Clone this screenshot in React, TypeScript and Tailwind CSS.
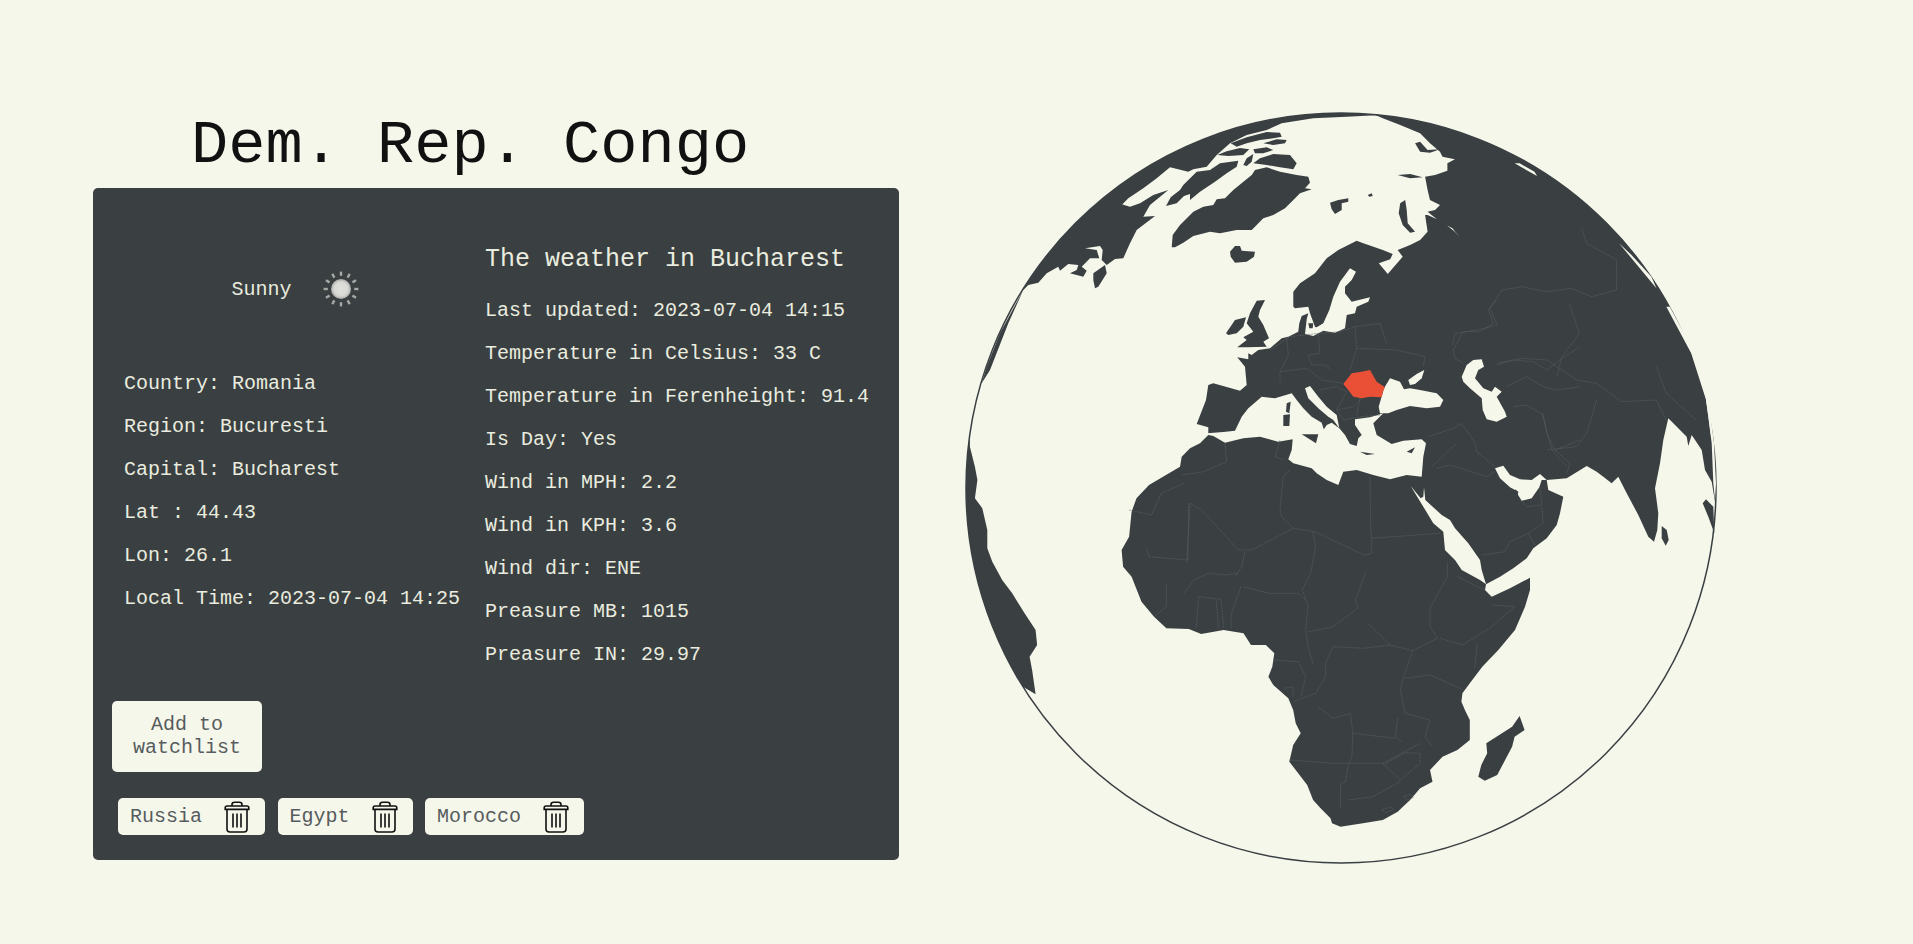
type Pt = [number, number];

// traced from crops of the map: each helper maps crop coords to page coords
const crop = (ox: number, oy: number, sx: number, sy: number) => (s: string): Pt[] =>
  s
    .trim()
    .split(/\s+/)
    .map((p) => {
      const [x, y] = p.split(",").map(Number);
      return [ox + x * sx, oy + y * sy] as Pt;
    });

const c3 = crop(950, 100, 780 / 1568, 1 / 3);
const c4 = crop(950, 480, 780 / 1568, 1 / 3);
const c7 = crop(980, 110, 1 / 3, 1 / 3);
const c8 = crop(1180, 300, 1 / 3, 1 / 3);
const c9 = crop(1400, 400, 1 / 3, 1 / 3);

const CX = 1341;
const CY = 488;
const R = 375;

const arc = (from: number, to: number): Pt[] => {
  const pts: Pt[] = [];
  for (let a = from; a <= to; a += 2) {
    const t = (a * Math.PI) / 180;
    pts.push([CX + R * Math.sin(t), CY - R * Math.cos(t)]);
  }
  return pts;
};

const line = (pts: Pt[]) => "M" + pts.map((p) => `${p[0].toFixed(1)},${p[1].toFixed(1)}`).join("L");
const poly = (pts: Pt[]) => line(pts) + "Z";

const mainLand: Pt[] = [
  ...c7("940,590 940,545 960,520 1005,490 1040,445 1075,420 1130,392 1150,400"),
  ...c3(
    "870,450 890,462 885,478 862,490 880,522 890,505 910,470 900,450 925,435 945,420 960,395 955,345 960,345 990,365 1015,395 1025,412 1010,385 985,365 960,335 975,330 985,315 965,300 960,270 955,230 975,225 1000,212 1000,190 1015,178 990,170 985,155 965,130 945,100 905,75 870,55 855,45",
  ),
  ...arc(5, 92),
  ...c9(
    "945,305 935,245 915,210 905,150 875,105 865,138 860,110 820,70 805,55 790,120 780,190 765,265 775,340 772,390 762,425 745,410 715,345 680,280 655,230 635,250 610,230 590,215 560,198 500,235 440,240 445,270 490,290 480,340 470,375 440,415 400,445 380,475 340,505 300,530 258,553 255,570 275,590 330,565 390,533 390,570 375,620 345,690 295,750",
  ),
  ...c4(
    "1070,560 1045,610 1030,640 1028,665 1035,690 1045,720 1045,780 1020,810 990,830 965,870 970,905 945,925 925,960 900,995 870,1020 830,1030 785,1040 768,1030 765,1015 745,985 730,960 718,915 700,880 682,845 690,795 705,760 695,730 690,690 680,655 650,615 640,590 648,560 652,520 635,495 605,495 590,460 550,450 505,462 480,447 435,445 410,410 385,365 365,290 348,260 345,210 360,170 365,95 375,55 400,15",
  ),
  ...c8("0,500 5,470 30,445 60,430 85,405 85,382 50,372 78,300 85,255 100,250 180,272 200,255 195,200 172,172 205,178"),
  ...c7("805,730 815,735 835,720 870,715 905,685 925,680 955,665 958,640 965,618 985,610 980,628 975,672 1005,650 990,610 985,590 945,595"),
];

const northAmerica: Pt[] = [
  ...arc(302, 366),
  ...c7(
    "1100,20 1000,25 905,40 860,60 800,75 750,100 710,135 680,170 640,178 625,185 570,172 530,205 490,235 445,265 420,290 390,315 425,283 450,290 480,280 520,255 565,240 510,285 490,320 525,318 470,360 450,400 430,445 405,447 380,465 365,450 368,420 360,408 315,415 350,420 358,445 330,445 305,470 320,482 310,500 270,490 290,480 295,465 265,462 240,482 235,470 200,490 175,518 145,525 130,540",
  ),
];

const southAmerica: Pt[] = [
  ...arc(238, 278),
  ...c3("40,1040 50,1100 55,1140"),
  ...c4("50,55 65,85 75,150 75,205 85,245 105,300 125,340 150,400 172,450 175,495 160,530 165,570 172,643"),
];

const seas: Pt[][] = [
  // Mediterranean
  c8(
    "82,400 130,396 165,392 185,350 205,325 245,290 285,295 335,280 350,300 370,325 395,350 425,368 432,390 418,408 440,375 455,368 478,385 495,405 510,432 530,438 535,415 545,405 525,375 525,358 570,352 610,340 580,370 590,405 635,432 670,422 725,418 738,430 730,470 725,530 680,525 630,538 580,525 530,510 490,515 475,555 440,540 410,520 395,505 340,490 325,478 335,450 338,418 295,425 240,410 190,415 135,428 100,408 85,405",
  ),
  // Adriatic
  c8("375,265 390,258 415,290 440,320 470,345 478,385 460,360 445,350 415,325 385,295"),
  // Black Sea, Azov
  c8("596,320 612,265 630,235 660,245 672,268 690,265 720,270 770,280 790,300 780,320 740,325 690,318 650,330 625,340 600,340"),
  c8("685,240 710,222 733,210 725,235 705,252 690,255"),
  // Caspian
  c8("845,230 860,195 880,180 905,178 912,200 895,210 885,235 910,265 935,275 945,260 965,275 950,290 975,335 980,350 950,365 920,358 908,330 905,295 870,265 850,245"),
  // Red Sea
  c9("32,258 62,295 70,290 72,262 76,300 125,345 150,360 165,385 205,430 240,480 245,510 258,553 240,540 185,510 165,480 135,450 130,395 100,370 70,320"),
  // Persian Gulf
  c9("285,205 310,197 330,225 360,238 395,240 420,222 440,240 425,240 418,262 395,295 365,302 345,270 330,262 300,235"),
  // Baltic
  c7("1110,475 1128,485 1115,510 1095,530 1095,550 1115,575 1170,562 1165,575 1130,590 1125,610 1100,615 1095,655 1065,668 1030,662 1000,678 975,672 985,655 1000,650 1010,652 1030,640 1048,600 1060,560 1080,515"),
  // slivers just inside the rim
  c3("1135,190 1180,228 1175,215 1145,190"),
  c3("1345,430 1420,565 1410,530 1370,465"),
  c3("1440,620 1490,760 1520,900 1530,1010 1533,1010 1525,900 1497,760 1447,620"),
  c9("918,0 925,50 935,130 940,250 945,300 948,250 942,130 930,40 925,0"),
];

const islands: Pt[][] = [
  // Greenland
  c7("575,412 578,375 600,345 640,305 670,290 700,285 710,268 735,265 760,240 815,195 825,180 860,172 900,185 950,195 985,200 990,218 975,235 995,238 960,250 940,270 915,295 880,315 850,325 830,345 815,360 770,360 720,370 690,365 640,378 610,398 585,412"),
  // Baffin and the Arctic islands
  c7("558,288 572,262 600,240 610,225 650,185 690,180 720,160 775,152 770,170 740,190 705,215 660,245 630,270 630,252 612,258 590,280"),
  c7("712,135 740,124 780,114 808,118 790,135 745,138"),
  c7("820,118 860,112 880,120 850,130 825,130"),
  c7("752,100 800,82 860,66 900,68 905,80 880,85 840,90 800,100 770,110"),
  c7("850,100 890,88 920,90 915,100 880,105"),
  c7("790,165 800,145 820,132 815,155 800,168"),
  c7("820,160 840,145 880,132 930,135 950,160 940,178 900,172 860,165"),
  c7("340,490 375,465 380,490 355,530 345,535 340,510"),
  // Iceland, Svalbard
  c7("750,425 765,408 780,408 785,422 825,425 822,440 800,455 765,458 752,440"),
  c7("1050,278 1075,270 1105,265 1105,275 1085,280 1085,300 1065,312 1055,298"),
  c7("1163,255 1175,250 1178,258 1168,260"),
  // Novaya Zemlya etc
  c3("905,310 915,300 918,330 920,370 935,395 925,398 910,375 902,340"),
  c3("935,130 945,125 960,150 985,148 965,158 945,155"),
  c3("900,225 925,222 950,232 925,235"),
  // Ireland, Britain
  c7("738,670 765,630 798,622 790,650 770,670 745,675"),
  c7("815,600 830,572 855,570 840,600 835,620 850,645 867,685 850,695 860,710 800,712 772,712 800,690 790,682 820,665 800,640 810,610"),
  // Med islands
  c8("680,455 705,442 695,460"),
  c8("540,455 585,462 560,465"),
  c8("310,345 330,343 328,378 310,378"),
  c8("320,310 332,305 328,340 318,335"),
  c8("365,403 415,403 408,430"),
  // Qatar
  c9("345,268 355,275 352,298 342,285"),
  // Zealand
  c7("985,640 1000,640 998,655 988,655"),
  // Madagascar, Sri Lanka, Sumatra
  c4("1145,708 1155,750 1135,770 1130,800 1100,885 1075,902 1062,890 1068,855 1080,820 1078,790 1130,740"),
  c9("785,378 800,390 806,420 797,437 785,415"),
  c9("908,310 918,298 940,320 943,400 925,350"),
  // thin rim slivers on the west
  c7("130,540 60,670 20,770 5,820 30,780 85,640"),
];

const borders: Pt[][] = [
  // north Africa, Middle East
  c8("570,530 572,690 575,715 575,760 552,765 405,695 340,685 215,750 175,750 65,630 30,610 20,790"),
  c8("575,715 780,700"),
  c8("340,685 305,650 300,630 310,530 330,510"),
  c8("195,755 185,800 165,830"),
  c8("135,428 140,485 70,515 5,525"),
  c8("300,420 285,470 310,480"),
  c8("745,410 820,385 845,370 885,430 890,455 945,500"),
  c8("755,500 830,430"),
  c8("770,505 810,495 920,530 945,515"),
  c8("820,150 850,95 900,95 940,70 925,30 950,0"),
  c8("820,150 825,175 850,190"),
  c8("950,195 1000,180 1060,185 1100,210 1140,180 1200,140"),
  c8("980,260 1040,230 1090,260 1130,270 1200,260"),
  c8("1000,320 1040,315 1090,345 1100,400 1125,450 1200,420"),
  c8("1160,520 1170,490 1125,450"),
  c8("1080,560 1085,615 1040,620 1020,600"),
  c8("1085,620 1090,670 1045,700 990,725 975,755 905,765"),
  c8("1045,700 1065,735"),
  // Europe
  c8("270,150 330,110 415,100 420,160 385,165 395,195 440,195 450,210"),
  c8("320,110 325,165 300,215 300,250"),
  c8("300,215 380,205 425,240 490,250"),
  c8("415,100 480,95 525,80 600,70 620,130"),
  c8("525,80 530,145 510,210"),
  c8("530,145 650,150 735,170 730,200"),
  c8("420,270 470,260 500,275 470,330 490,360 540,350 600,345"),
  c8("540,295 530,345"),
  c8("470,330 520,320 545,295"),
  // upper Asia (top crop)
  c3("1010,735 1015,700 1060,690 1100,675 1085,625 1110,570 1150,560 1200,575 1250,565 1290,590 1340,570 1340,480 1280,430 1270,385"),
  c3("1245,610 1265,700 1230,770 1220,830"),
  c3("1100,790 1150,775 1200,780 1260,840 1300,850 1350,905 1420,900 1440,960"),
  c3("1190,940 1210,1050 1240,1100"),
  c3("1300,900 1280,1000 1260,1040 1200,1050"),
  c3("1420,800 1440,880 1500,960"),
  // Africa (bottom crop)
  c4("360,90 405,105 425,40 470,10"),
  c4("480,70 478,240 400,230 395,205"),
  c4("730,155 735,200 725,280 708,330 720,375 715,450 720,500 730,555"),
  c4("835,280 830,300 815,360 820,385 770,440 720,455"),
  c4("840,430 885,495 930,512 980,475 965,440 965,385 1000,290 1000,245"),
  c4("1020,290 1075,330"),
  c4("885,495 830,505 770,500 755,550 755,590 735,640 690,665"),
  c4("590,320 640,340 700,340 715,360"),
  c4("585,320 565,405 565,445"),
  c4("500,350 495,445"),
  c4("500,350 545,358 550,445"),
  c4("535,360 540,445"),
  c4("470,340 490,300 520,280 555,285 580,280"),
  c4("435,310 435,380 410,410"),
  c4("1060,490 1055,565"),
  c4("985,475 1030,495 1085,445 1135,380 1090,375"),
  c4("930,512 910,600 905,630 915,700 965,720 955,770 970,800"),
  c4("915,595 965,585 1030,628"),
  c4("900,715 895,770 908,785"),
  c4("740,680 770,715 805,700 810,760 895,775"),
  c4("810,760 808,830 800,860"),
  c4("682,840 770,850 870,850 945,790"),
  c4("800,860 795,905 785,910 785,985"),
  c4("870,850 905,900 945,850 945,820 915,818 870,855"),
  c4("905,905 850,950 800,960"),
  c4("868,990 885,980 892,988 875,998 868,990"),
  c4("912,950 925,942 932,952 920,960 912,950"),
  c4("650,540 700,545 715,590 705,650"),
  c4("672,625 690,620 690,650"),
];

const romania = c8("490,252 515,220 545,215 570,210 590,245 615,262 610,272 605,292 570,290 545,295 520,290 505,270");

function Globe() {
  return (
    <svg viewBox="950 100 780 780" className="w-[780px] h-[780px] shrink-0 mt-[100px] ml-[51px]">
      <circle cx={CX} cy={CY} r={R} fill="none" stroke="#3a3f42" strokeWidth="1.5" />
      <g fill="#3a3f42">
        <path d={poly(mainLand)} />
        <path d={poly(northAmerica)} />
        <path d={poly(southAmerica)} />
      </g>
      <g fill="#f5f7eb">
        {seas.map((s, i) => (
          <path key={i} d={poly(s)} />
        ))}
      </g>
      <g fill="#3a3f42">
        {islands.map((s, i) => (
          <path key={i} d={poly(s)} />
        ))}
      </g>
      <g fill="none" stroke="#5f6467" strokeWidth="0.5" strokeDasharray="2.5 0.5">
        {borders.map((s, i) => (
          <path key={i} d={line(s)} />
        ))}
      </g>
      <path d={poly(romania)} fill="#ea5036" />
    </svg>
  );
}

function SunIcon() {
  const rays = Array.from({ length: 12 }, (_, i) => i * 30);
  return (
    <svg viewBox="0 0 40 40" className="w-10 h-10 shrink-0">
      <defs>
        <radialGradient id="disc">
          <stop offset="0%" stopColor="#dfdfdb" />
          <stop offset="70%" stopColor="#d8d8d4" />
          <stop offset="100%" stopColor="#a9aaa7" />
        </radialGradient>
      </defs>
      {rays.map((a) => (
        <line key={a} x1="20" y1="2.6" x2="20" y2="6.8" stroke="#a8a9a5" strokeWidth="2.4" transform={`rotate(${a} 20 20)`} />
      ))}
      <circle cx="20" cy="20" r="10" fill="url(#disc)" />
    </svg>
  );
}

function TrashIcon() {
  return (
    <svg viewBox="0 0 26 32" fill="none" stroke="#111" strokeWidth="1.6" className="w-[26px] h-8 shrink-0">
      <path d="M8 5V3.5C8 2 9 1.2 10.5 1.2h5C17 1.2 18 2 18 3.5V5" />
      <path d="M1.2 8.4V6.8C1.2 5.6 2 5 3 5h20c1 0 1.8.6 1.8 1.8v1.6z" />
      <path d="M3 8.5V28c0 1.8 1.2 3 3 3h14c1.8 0 3-1.2 3-3V8.5" />
      <path d="M9 12.5v14M13 12.5v14M17 12.5v14" />
    </svg>
  );
}

const placeRows = ["Country: Romania", "Region: Bucuresti", "Capital: Bucharest", "Lat : 44.43", "Lon: 26.1", "Local Time: 2023-07-04 14:25"];

const weatherRows = [
  "Last updated: 2023-07-04 14:15",
  "Temperature in Celsius: 33 C",
  "Temperature in Ferenheight: 91.4",
  "Is Day: Yes",
  "Wind in MPH: 2.2",
  "Wind in KPH: 3.6",
  "Wind dir: ENE",
  "Preasure MB: 1015",
  "Preasure IN: 29.97",
];

export default function App() {
  return (
    <div className="min-h-screen bg-[#f5f7eb] flex items-start text-[20px] leading-[23px] font-['Liberation_Mono',monospace] overflow-hidden">
      <div className="w-[806px] ml-[93px] shrink-0">
        <h1 className="mt-[113px] h-[75px] pl-[98px] text-[62px] leading-[66px] text-[#111] whitespace-nowrap">Dem. Rep. Congo</h1>
        <div className="h-[672px] rounded-[5px] bg-[#3a3f42] text-[#e9ecdf] flex flex-col">
          <div className="flex h-[478px] pl-[31px] gap-[17px]">
            <div className="w-[344px]">
              <div className="flex items-center justify-center gap-[29px] mt-[81px]">
                <span>Sunny</span>
                <SunIcon />
              </div>
              <div className="flex flex-col gap-5 mt-[63px]">
                {placeRows.map((r) => (
                  <p key={r} className="whitespace-nowrap">{r}</p>
                ))}
              </div>
            </div>
            <div>
              <h3 className="mt-[58px] text-[25px] leading-[28px] whitespace-nowrap">The weather in Bucharest</h3>
              <div className="flex flex-col gap-5 mt-[25px]">
                {weatherRows.map((r) => (
                  <p key={r} className="whitespace-nowrap">{r}</p>
                ))}
              </div>
            </div>
          </div>
          <button type="button" className="mt-[35px] ml-[19px] w-[150px] h-[71px] pb-[2px] rounded-[5px] bg-[#f5f7eb] text-[#575c5e] text-center">
            Add to
            <br />
            watchlist
          </button>
          <div className="flex gap-[12.5px] mt-[26px] ml-[25px]">
            {["Russia", "Egypt", "Morocco"].map((c) => (
              <div key={c} className="h-[37px] flex items-center pl-3 pr-[15px] rounded-[5px] bg-[#f5f7eb] text-[#575c5e]">
                <span>{c}</span>
                <span className="ml-[22px]">
                  <TrashIcon />
                </span>
              </div>
            ))}
          </div>
        </div>
      </div>
      <Globe />
    </div>
  );
}
